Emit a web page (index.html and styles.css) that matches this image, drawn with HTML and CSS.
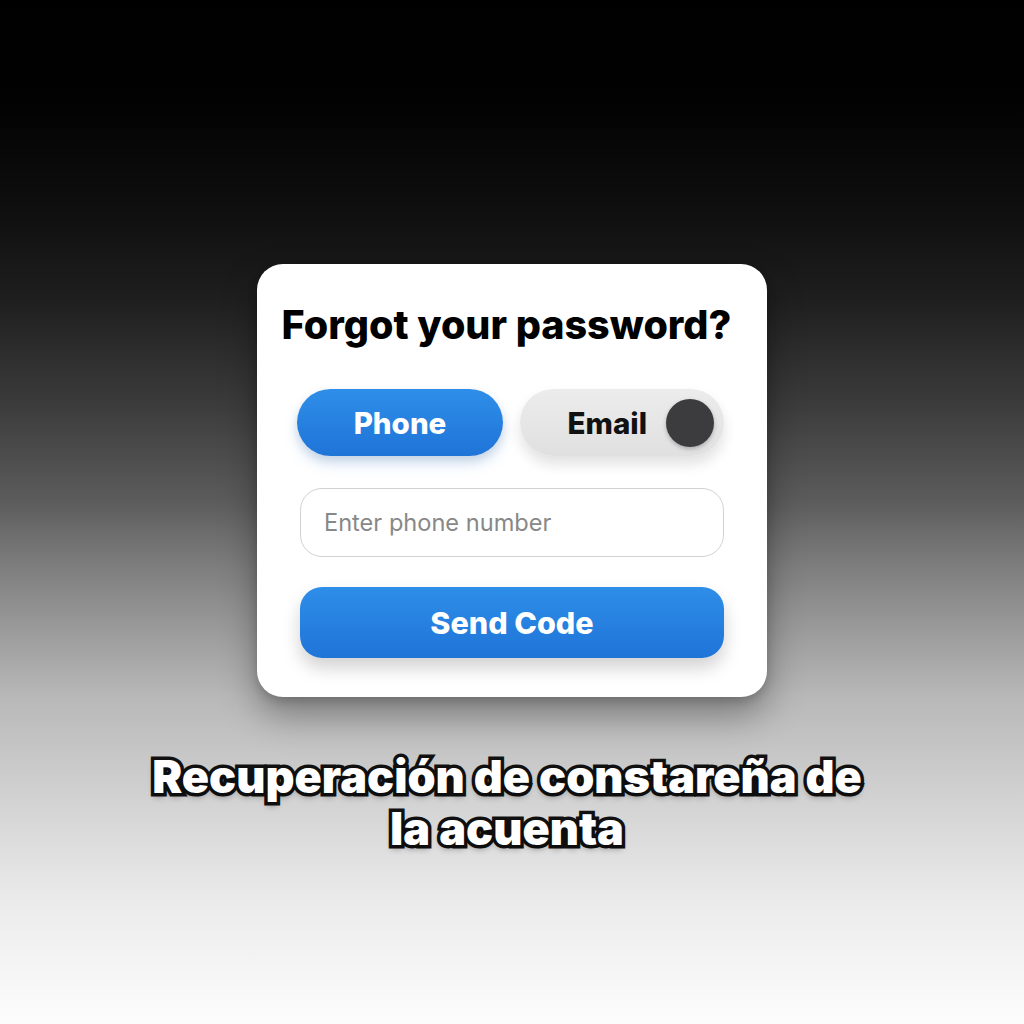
FILE: index.html
```html
<!DOCTYPE html>
<html lang="en">
<head>
<meta charset="utf-8">
<title>Forgot your password?</title>
<link rel="stylesheet" href="styles.css">
</head>
<body>
<main class="stage">
  <section class="card">
    <h1 class="title">Forgot your password?</h1>
    <div class="segments">
      <button class="seg seg-active" type="button">Phone</button>
      <button class="seg seg-toggle" type="button"><span class="seg-label">Email</span><span class="knob"></span></button>
    </div>
    <input class="field" type="tel" placeholder="Enter phone number">
    <button class="send" type="button">Send Code</button>
  </section>
  <p class="caption">Recuperación de constareña de<br>la acuenta</p>
</main>
</body>
</html>
```
FILE: styles.css
```css
* { box-sizing: border-box; }
html, body { margin: 0; padding: 0; }
body {
  width: 1024px;
  height: 1024px;
  overflow: hidden;
  background: linear-gradient(180deg, #000 0%, #020202 10%, #0e0e0e 20%, #1e1e1e 29%, #3a3a3a 39%, #5c5c5c 49%, #777 54%, #8f8f8f 59%, #b8b8b8 68%, #d2d2d2 78%, #ebebeb 88%, #fafafa 98%, #fcfcfc 100%);
  font-family: Inter, "Noto Sans", sans-serif;
}
.stage {
  display: flex;
  flex-direction: column;
  align-items: center;
  padding-top: 264px;
}
.card {
  width: 510px;
  height: 433px;
  background: #fff;
  border-radius: 26px;
  box-shadow: 0 18px 36px rgba(0,0,0,0.35), 0 4px 10px rgba(0,0,0,0.15);
  display: flex;
  flex-direction: column;
  align-items: center;
  padding: 37px 43px 0 40px;
}
.title {
  margin: 0 0 0 -8px;
  font-size: 39.5px;
  font-weight: 800;
  color: #000;
  letter-spacing: 0;
  line-height: 48px;
  text-align: center;
  white-space: nowrap;
}
.segments {
  display: flex;
  gap: 17px;
  margin-top: 40px;
  width: 427px;
}
.seg {
  height: 67px;
  border: 0;
  border-radius: 34px;
  font-family: Inter, "Noto Sans", sans-serif;
  font-size: 29.5px;
  font-weight: 800;
  padding: 0;
  cursor: pointer;
}
.seg-active {
  width: 206px;
  color: #fff;
  background: linear-gradient(180deg, #2e8ee8 0%, #1f74d8 100%);
  box-shadow: 0 8px 14px rgba(31,116,216,0.18), 0 4px 10px rgba(0,0,0,0.10);
}
.seg-toggle {
  width: 204px;
  background: linear-gradient(180deg, #ececec 0%, #e0e0e0 100%);
  color: #111;
  display: flex;
  align-items: center;
  justify-content: flex-end;
  padding-right: 10px;
  gap: 19px;
  box-shadow: 0 8px 14px rgba(0,0,0,0.12);
}
.knob {
  width: 48px;
  height: 48px;
  border-radius: 50%;
  background: #3c3c3e;
  box-shadow: 0 2px 4px rgba(0,0,0,0.25);
}
.field {
  margin-top: 32px;
  margin-left: 3px;
  width: 424px;
  height: 69px;
  border: 1.5px solid #d2d2d2;
  border-radius: 22px;
  padding: 0 23px;
  font-family: Inter, "Noto Sans", sans-serif;
  font-size: 23.6px;
  color: #333;
  background: #fff;
  outline: none;
}
.field::placeholder { color: #888; }
.send {
  margin-top: 30px;
  margin-left: 3px;
  width: 424px;
  height: 71px;
  border: 0;
  border-radius: 22px;
  background: linear-gradient(180deg, #2e8ee8 0%, #1f74d8 100%);
  color: #fff;
  font-family: Inter, "Noto Sans", sans-serif;
  font-size: 30.5px;
  font-weight: 800;
  box-shadow: 0 10px 18px rgba(0,0,0,0.18);
  cursor: pointer;
}
.caption {
  margin: 54px 10px 0 0;
  text-align: center;
  font-family: Inter, "Liberation Sans", sans-serif;
  font-weight: 900;
  font-size: 45px;
  line-height: 52px;
  color: #fff;
  -webkit-text-stroke: 7px #111;
  paint-order: stroke fill;
  text-shadow: 0 4px 6px rgba(0,0,0,0.35);
  letter-spacing: 0;
}
```
